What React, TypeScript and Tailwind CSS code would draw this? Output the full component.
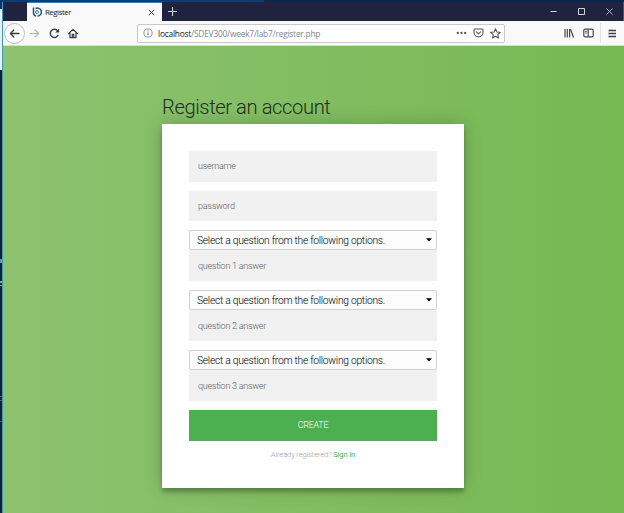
import React from 'react';

function Logo() {
  return (
    <svg width="10" height="10" viewBox="0 0 20 20" fill="none" stroke="#20547c" strokeWidth="3">
      <path d="M3 1v10a7 7 0 0 0 5 7M7 3a8 8 0 1 1 4 15" />
      <circle cx="10" cy="10" r="3" stroke="#3f7da3" strokeWidth="2" />
    </svg>
  );
}

function TabStrip() {
  return (
    <div className="flex h-[19px] border-r border-[#2c5f8c] bg-[#202340]">
      <div className="w-6" />
      <div className="flex h-full w-[135px] items-center border-t border-[#0a84ff] bg-[#f9f9fa] pl-[5px] pr-[7px]">
        <Logo />
        <span className="ml-[3px] flex-1 font-['Open_Sans',sans-serif] text-[7.7px] leading-[16px] tracking-[-0.38px] text-[#15202b]">Register</span>
        <svg width="7" height="7" viewBox="0 0 7 7" stroke="#333" strokeWidth="1" fill="none"><path d="M.8.8l5.4 5.4M6.2.8L.8 6.2" /></svg>
      </div>
      <div className="flex flex-1 items-center pl-[6px]">
        <svg width="9" height="9" viewBox="0 0 9 9" stroke="#c9cad5" strokeWidth="1.1"><path d="M4.5 0v9M0 4.5h9" /></svg>
      </div>
      <div className="flex items-center gap-[21px] pr-[10px]">
        <svg width="7" height="7" viewBox="0 0 7 7" stroke="#d5d6dd"><path d="M.5 3.5h6" /></svg>
        <svg width="7" height="7" viewBox="0 0 7 7" stroke="#d5d6dd" fill="none"><path d="M.5.5h6v6H.5z" /></svg>
        <svg width="7" height="7" viewBox="0 0 7 7" stroke="#d5d6dd" strokeWidth=".8" fill="none"><path d="M.4.4l6.2 6.2M6.6.4L.4 6.6" /></svg>
      </div>
    </div>
  );
}

function Toolbar() {
  return (
    <div className="flex h-[25px] items-center border-b border-[#dcdcdf] bg-[#f9f9fa]">
      <div className="ml-[1px] flex h-[21px] w-[21px] shrink-0 items-center justify-center rounded-full border border-[#bcbcbe] bg-white">
        <svg width="11" height="11" viewBox="0 0 16 16" fill="none" stroke="#3b3b3f" strokeWidth="1.9" strokeLinecap="round"><path d="M14.5 8H2M7 3L2 8l5 5" /></svg>
      </div>
      <svg className="ml-[4px] shrink-0" width="11" height="11" viewBox="0 0 16 16" fill="none" stroke="#b5b5b8" strokeWidth="1.8" strokeLinecap="round"><path d="M1.5 8H14M9 3l5 5-5 5" /></svg>
      <svg className="ml-[9px] shrink-0" width="11" height="11" viewBox="0 0 16 16" fill="none" stroke="#3b3b3f" strokeWidth="2"><path d="M13.4 10.3A6 6 0 1 1 12.5 4" /><path d="M14.6 1v5.500H9z" fill="#3b3b3f" stroke="none" /></svg>
      <svg className="ml-[8px] shrink-0" width="10" height="11" viewBox="0 0 16 16" fill="none" stroke="#3b3b3f" strokeWidth="1.9" strokeLinejoin="round" strokeLinecap="round"><path d="M1 8l7-6.5L15 8M3.2 7.5v7h9.6v-7M6.8 14V9.5h2.4V14" /></svg>
      <div className="ml-[59px] flex h-[19px] w-[368px] shrink-0 items-center rounded-[2px] border border-[#c9c9cc] bg-white pl-[5px] pr-[3px]">
        <svg width="10" height="10" viewBox="0 0 10 10" fill="none" stroke="#737377" strokeWidth=".8"><circle cx="5" cy="5" r="4.1" /><path d="M5 4.4v2.9M5 2.5v1" strokeWidth="1.1" /></svg>
        <div className="ml-[5px] flex-1 whitespace-nowrap pt-px font-['Open_Sans',sans-serif] text-[8.4px] leading-[16px] tracking-[-0.22px] text-[#85858a]"><span className="text-[#18181b]">localhost</span>/SDEV300/week7/lab7/register.php</div>
        <svg width="11" height="10" viewBox="0 0 11 10" fill="#55555a"><circle cx="1.8" cy="5" r="1.15" /><circle cx="5.5" cy="5" r="1.15" /><circle cx="9.2" cy="5" r="1.15" /></svg>
        <svg className="ml-[6px]" width="11" height="10" viewBox="0 0 16 15" fill="none" stroke="#515155" strokeWidth="1.6" strokeLinecap="round" strokeLinejoin="round"><path d="M2.5 1.5h11q1.2 0 1.2 1.2v4.2a6.7 6.5 0 0 1-13.4 0V2.7q0-1.2 1.2-1.2zM4.8 5.8L8 8.9l3.2-3.1" /></svg>
        <svg className="ml-[6px]" width="11" height="11" viewBox="0 0 16 16" fill="none" stroke="#515155" strokeWidth="1.5" strokeLinejoin="round"><path d="M8 1.2l2 4.6 5 .5-3.8 3.3 1.2 4.9L8 12l-4.4 2.5 1.2-4.9L1 6.3l5-.5z" /></svg>
      </div>
      <div className="flex-1" />
      <svg width="10" height="10" viewBox="0 0 10 10" fill="none" stroke="#49494d" strokeWidth="1.2"><path d="M1 1v8.5M3.3 1v8.5M5.6 1v8.5M6.6 1.2l2.9 8.3" /></svg>
      <svg className="ml-[9px]" width="11" height="10" viewBox="0 0 11 10" fill="none" stroke="#49494d" strokeWidth="1.2"><rect x=".8" y="1.2" width="9.4" height="7.6" rx="1.3" /><path d="M5.2 1v8M2.3 3.3h1.5M2.3 5h1.5" /></svg>
      <div className="ml-[6px] h-[20px] w-px bg-[#e3e3e6]" />
      <svg className="ml-[7px] mr-[7px]" width="9" height="9" viewBox="0 0 9 9" stroke="#3f3f43" strokeWidth="1.3"><path d="M.5 1.5h7.5M.5 4.5h7.5M.5 7.5h7.5" /></svg>
    </div>
  );
}

function Field({ label, className }: { label: string; className: string }) {
  return (
    <div className={`flex items-center bg-[#f1f1f1] pl-[9px] text-[9px] font-light tracking-[-0.25px] text-[#5c5c5c] ${className}`}>
      <span className="leading-[14px]">{label}</span>
    </div>
  );
}

function Question({ n }: { n: number }) {
  return (
    <div>
      <div className="flex h-[20px] items-center justify-between rounded-[2px] border border-[#d1d1d1] bg-[#fcfcfc] pl-[7px] pr-[4px] text-[10.3px] font-light tracking-[-0.28px] text-black">
        <span className="whitespace-nowrap pt-[2px] leading-[16px]">Select a question from the following options.</span>
        <svg width="6" height="4" viewBox="0 0 6 4"><path d="M0 .3h6L3 3.6z" fill="#000" /></svg>
      </div>
      <Field label={`question ${n} answer`} className="h-[31px]" />
    </div>
  );
}

export default function App() {
  return (
    <div className="flex h-[513px] w-[624px] overflow-hidden bg-[#003c72] font-[Roboto,sans-serif]">
      <div className="flex w-[2px] flex-col bg-[#17202b]">
        <div className="h-[9px] bg-[#063766]" />
        <div className="h-[61px] bg-[#eceff2]" />
        <div className="h-[189px]" />
        <div className="h-[4px] bg-[#6298ba]" />
        <div className="h-[18px]" />
        <div className="h-[2px] bg-[#89b95d]" />
        <div className="h-[2px]" />
        <div className="h-px bg-[#89b95d]" />
        <div className="h-[110px]" />
        <div className="h-px bg-[#884b68]" />
        <div className="h-[3px]" />
        <div className="h-px bg-[#884b68]" />
        <div className="h-[20px]" />
        <div className="h-px bg-[#28577d]" />
      </div>
      <div className="flex min-w-0 flex-1 flex-col">
        <div className="flex h-[2px]"><div className="w-[262px] bg-[#003f7c]" /><div className="flex-1 bg-[#032a4d]" /></div>
        <div className="flex flex-1 flex-col border-l border-[#329bc1]">
          <TabStrip />
          <Toolbar />
          <main className="flex flex-1 flex-col bg-linear-to-l from-[#76b852] to-[#8dc26f] pl-[159px] pt-[48px]">
            <h1 className="h-[30px] whitespace-nowrap text-[20.2px] font-light leading-[27px] tracking-[-0.42px] text-[#222e20]">Register an account</h1>
            <div className="h-[364px] w-[302px] bg-white px-[27px] pt-[27px] shadow-[0_0_17px_0_rgba(0,0,0,0.2),0_4px_4px_0_rgba(0,0,0,0.24)]">
              <div className="flex flex-col">
                <Field label="username" className="h-[31px] pb-px" />
                <div className="h-[9px]" />
                <Field label="password" className="h-[30px]" />
                <div className="mt-[9px] flex flex-col gap-[9px]">
                  <Question n={1} />
                  <Question n={2} />
                  <Question n={3} />
                </div>
                <button className="mt-[9px] h-[31px] bg-[#4caf50] text-[9px] font-light tracking-[-0.25px] text-white">CREATE</button>
                <p className="mt-[7px] text-center text-[7.7px] font-light leading-[14px] tracking-[-0.18px] text-[#a0a0a0]">Already registered? <span className="font-normal text-[#4caf50]">Sign In</span></p>
              </div>
            </div>
          </main>
        </div>
      </div>
    </div>
  );
}
